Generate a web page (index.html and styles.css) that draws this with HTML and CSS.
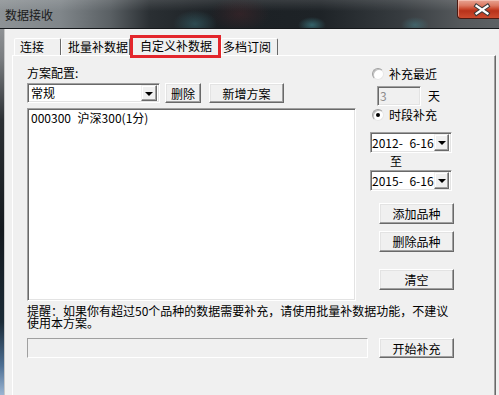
FILE: index.html
```html
<!DOCTYPE html>
<html lang="zh-CN">
<head>
<meta charset="utf-8">
<title>数据接收</title>
<link rel="stylesheet" href="styles.css">
</head>
<body>
<div class="win">
  <div class="titlebar">
    <span class="title">数据接收</span>
    <div class="close">
      <svg width="42" height="19" viewBox="0 0 42 19">
        <path d="M19.5 6 L30.5 13.5 M30.5 6 L19.5 13.5" stroke="#3a3a3a" stroke-width="4.2" stroke-linecap="square" fill="none"/>
        <path d="M19.5 6 L30.5 13.5 M30.5 6 L19.5 13.5" stroke="#ffffff" stroke-width="2.2" stroke-linecap="square" fill="none"/>
      </svg>
    </div>
  </div>
  <div class="body">
    <div class="frame"></div>
    <div class="client">
      <div class="tabs">
        <div class="tab t1">连接</div>
        <div class="tab t2">批量补数据</div>
        <div class="tab t3 active">自定义补数据</div>
        <div class="tab t4">多档订阅</div>
      </div>
      <div class="panel">
        <div class="cols">
          <div class="left">
            <div class="label">方案配置:</div>
            <div class="row-combo">
              <div class="combo">
                <span class="combo-text">常规</span>
                <span class="drop"><span class="tri"></span></span>
              </div>
              <button class="btn b-del">删除</button>
              <button class="btn b-new">新增方案</button>
            </div>
            <div class="list">
              <div class="item">000300&#8199;沪深300(1分)</div>
            </div>
          </div>
          <div class="right">
            <div class="radio-row r1"><span class="radio"></span><span>补充最近</span></div>
            <div class="num-row"><span class="num">3</span><span class="day">天</span></div>
            <div class="radio-row r2"><span class="radio checked"></span><span>时段补充</span></div>
            <div class="date d1"><span class="date-text">2012-&#8199;6-16</span><span class="drop"><span class="tri"></span></span></div>
            <div class="to">至</div>
            <div class="date d2"><span class="date-text">2015-&#8199;6-16</span><span class="drop"><span class="tri"></span></span></div>
            <button class="btn side s1">添加品种</button>
            <button class="btn side s2">删除品种</button>
            <button class="btn side s3">清空</button>
          </div>
        </div>
        <div class="note">
          <div class="note-line">提醒：如果你有超过50个品种的数据需要补充，请使用批量补数据功能，不建议</div>
          <div class="note-line">使用本方案。</div>
        </div>
        <div class="progress-row">
          <div class="progress"></div>
          <button class="btn b-start">开始补充</button>
        </div>
      </div>
    </div>
  </div>
</div>
</body>
</html>
```

FILE: styles.css
```css
html, body {
  margin: 0;
  padding: 0;
  width: 499px;
  height: 395px;
  overflow: hidden;
}
body {
  font-family: "Noto Sans CJK SC", "Liberation Sans", sans-serif;
  font-size: 12px;
  color: #000;
  background: #101418;
}
.win {
  display: flex;
  flex-direction: column;
  height: 395px;
}
.titlebar {
  box-sizing: border-box;
  height: 29px;
  flex: none;
  display: flex;
  align-items: flex-start;
  border-bottom: 1px solid #15181b;
  background:
    radial-gradient(ellipse 14px 8px at 312px 25px, rgba(70,150,160,0.55), transparent),
    radial-gradient(ellipse 14px 8px at 415px 25px, rgba(70,140,150,0.45), transparent),
    radial-gradient(ellipse 22px 14px at 195px 24px, rgba(60,120,130,0.45), transparent),
    radial-gradient(ellipse 30px 18px at 240px 14px, rgba(90,40,45,0.35), transparent),
    linear-gradient(180deg, rgba(255,255,255,0.12) 0, rgba(255,255,255,0) 40%),
    linear-gradient(90deg, #8d9295 0, #80868a 60px, #5a6064 110px, #2a2f33 150px, #1b2024 220px, #1e2327 320px, #363b3f 400px, #54585b 460px, #5d6164 499px);
}
.title {
  flex: 1;
  padding-left: 5px;
  line-height: 14px;
  margin-top: 8px;
  color: #1a1a1a;
}
.close {
  width: 42px;
  height: 19px;
  flex: none;
  box-sizing: border-box;
  border-left: 1px solid #4b1a12;
  border-bottom: 1px solid #4b1a12;
  border-bottom-left-radius: 4px;
  background: linear-gradient(180deg, #e8a493 0, #dc7a63 30%, #c9472c 50%, #b8321a 60%, #cc4a2e 100%);
  box-shadow: inset 1px 1px rgba(255,220,210,0.5);
}
.close svg { display: block; margin-left: -1px; }
.body {
  flex: 1;
  display: flex;
  min-height: 0;
}
.frame {
  width: 4px;
  flex: none;
  border-right: 1px solid #c8c8c8;
  background: linear-gradient(180deg, #8e9194 0, #7a7d80 8%, #2b2f33 25%, #14191e 55%, #1a2a36 80%, #4d6f93 92%, #9bb5d3 100%);
}
.client {
  flex: 1;
  display: flex;
  flex-direction: column;
  background: #f0f0f0;
  padding: 7px 3px 0 7px;
  overflow: hidden;
}
.tabs {
  display: flex;
  height: 19px;
  flex: none;
  padding-left: 2px;
  align-items: flex-end;
  position: relative;
  z-index: 1;
}
.tab {
  box-sizing: border-box;
  height: 17px;
  line-height: 15px;
  border: 1px solid;
  border-bottom: none;
  border-color: #ffffff #696969 transparent #ffffff;
  border-radius: 2px 2px 0 0;
  background: #f0f0f0;
  white-space: nowrap;
}
.t1 { width: 47px; padding-left: 5px; }
.t2 { width: 69px; padding-left: 6px; }
.t3 { width: 91px; padding-left: 9px; }
.t4 { width: 57px; padding-left: 1px; }
.tab.active {
  height: 20px;
  margin-bottom: -1px;
  line-height: 17px;
  position: relative;
}
.tab.active::after {
  content: "";
  position: absolute;
  left: -1px;
  right: -1px;
  top: -2px;
  bottom: -2px;
  border: 3px solid #e3262c;
}
.panel {
  flex: 1;
  box-sizing: border-box;
  border: 1px solid;
  border-bottom: none;
  border-color: #ffffff #696969 #696969 #ffffff;
  box-shadow: inset -1px 0 #a0a0a0;
  padding-left: 14px;
}
.cols {
  display: flex;
  gap: 14px;
}
.left {
  width: 329px;
  display: flex;
  flex-direction: column;
}
.label {
  margin-top: 10px;
  line-height: 14px;
  height: 14px;
}
.row-combo {
  margin-top: 3px;
  display: flex;
  height: 20px;
}
.combo, .list, .date, .num, .progress {
  box-sizing: border-box;
  border: 1px solid;
  border-color: #a0a0a0 #ffffff #ffffff #a0a0a0;
  box-shadow: inset 1px 1px #696969, inset -1px -1px #e3e3e3;
}
.combo {
  width: 133px;
  height: 20px;
  background: #fff;
  display: flex;
  align-items: center;
  padding: 2px 2px 2px 3px;
}
.combo-text {
  flex: 1;
  line-height: 14px;
}
.drop {
  box-sizing: border-box;
  width: 16px;
  height: 16px;
  border: 1px solid;
  border-color: #f0f0f0 #696969 #696969 #f0f0f0;
  box-shadow: inset -1px -1px #a0a0a0, inset 1px 1px #ffffff;
  background: #f0f0f0;
  display: flex;
  align-items: center;
  justify-content: center;
}
.tri {
  width: 0;
  height: 0;
  border-left: 4px solid transparent;
  border-right: 4px solid transparent;
  border-top: 4px solid #000;
  margin-top: 1px;
}
.btn {
  box-sizing: border-box;
  height: 20px;
  margin: 0;
  padding: 0;
  font: inherit;
  color: #000;
  line-height: 17px;
  text-align: center;
  background: #f0f0f0;
  border: 1px solid;
  border-color: #ffffff #696969 #696969 #ffffff;
  box-shadow: inset -1px -1px #a0a0a0, inset 1px 1px #e3e3e3;
  border-radius: 0;
}
.b-del { width: 36px; margin-left: 5px; }
.b-new { width: 75px; margin-left: 8px; }
.list {
  margin-top: 5px;
  height: 193px;
  background: #fff;
  padding: 2px 3px;
}
.item {
  white-space: pre;
  line-height: 14px;
}
.right {
  width: 100px;
  display: flex;
  flex-direction: column;
  align-items: flex-start;
}
.radio-row {
  display: flex;
  align-items: center;
  height: 14px;
  line-height: 14px;
  margin-left: 2px;
  gap: 5px;
}
.r1 { margin-top: 11px; }
.r2 { margin-top: 2px; }
.radio {
  box-sizing: border-box;
  width: 12px;
  height: 12px;
  border-radius: 50%;
  border: 1px solid;
  border-color: #a0a0a0 #e6e6e6 #e6e6e6 #a0a0a0;
  background: #fff;
  box-shadow: inset 1px 1px #c0c0c0;
  display: flex;
  align-items: center;
  justify-content: center;
}
.radio.checked::before {
  content: "";
  width: 4px;
  height: 4px;
  border-radius: 50%;
  background: #000;
}
.num-row {
  margin-top: 5px;
  margin-left: 7px;
  display: flex;
  align-items: center;
  height: 20px;
}
.num {
  width: 44px;
  height: 20px;
  background: #f0f0f0;
  color: #8d8d8d;
  padding-left: 2px;
  line-height: 17px;
}
.day {
  margin-left: 7px;
  line-height: 14px;
}
.date {
  width: 82px;
  height: 21px;
  background: #fff;
  display: flex;
  align-items: center;
  padding: 2px;
}
.date .drop { height: 17px; width: 15px; }
.date-text {
  flex: 1;
  white-space: pre;
  line-height: 14px;
  margin-left: -1px;
}
.d1 { margin-top: 10px; }
.to {
  height: 16px;
  line-height: 16px;
  margin-left: 20px;
}
.d2 { margin-top: 1px; }
.side {
  width: 75px;
  height: 21px;
  line-height: 18px;
  margin-left: 9px;
}
.s1 { margin-top: 12px; }
.s2 { margin-top: 7px; }
.s3 { margin-top: 17px; }
.note {
  margin-top: 3px;
  white-space: nowrap;
}
.note-line {
  height: 12px;
  line-height: 13px;
  overflow: visible;
}
.progress-row {
  margin-top: 10px;
  display: flex;
  height: 20px;
}
.progress {
  width: 341px;
  height: 20px;
  background: #f0f0f0;
  box-shadow: none;
}
.b-start {
  width: 75px;
  margin-left: 11px;
}
```
